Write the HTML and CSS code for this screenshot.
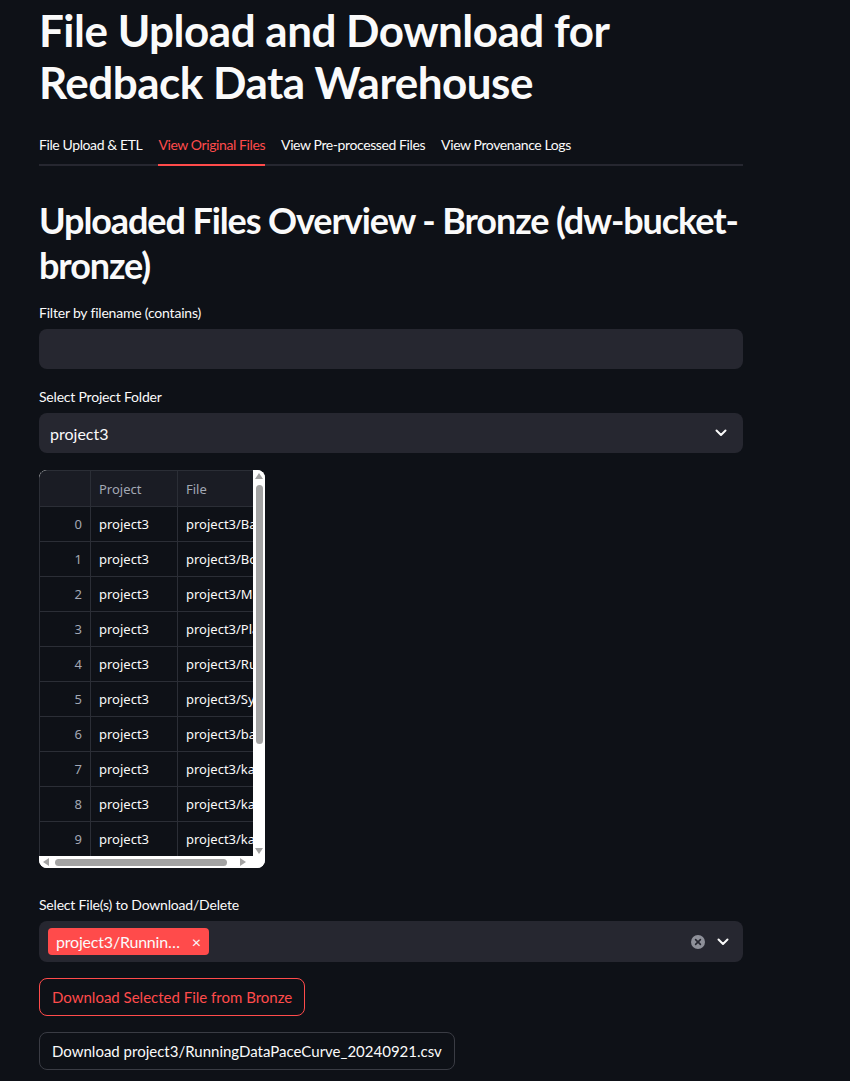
FILE: index.html
```html
<!DOCTYPE html>
<html lang="en">
<head>
<meta charset="utf-8">
<title>File Upload and Download for Redback Data Warehouse</title>
<link rel="stylesheet" href="styles.css">
</head>
<body>
<main class="main">
  <h1 class="title">File Upload and Download for Redback Data Warehouse</h1>

  <nav class="tabs">
    <span class="tab">File Upload &amp; ETL</span>
    <span class="tab tab-active">View Original Files</span>
    <span class="tab">View Pre-processed Files</span>
    <span class="tab">View Provenance Logs</span>
  </nav>

  <h2 class="subheader">Uploaded Files Overview - Bronze (dw-bucket-bronze)</h2>

  <div class="field">
    <label class="label">Filter by filename (contains)</label>
    <div class="input"></div>
  </div>

  <div class="field">
    <label class="label">Select Project Folder</label>
    <div class="input select">
      <span class="select-value">project3</span>
      <svg class="chev" width="12" height="8" viewBox="0 0 12 8"><path d="M1.5 1.5 L6 6 L10.5 1.5" fill="none" stroke="#fafafa" stroke-width="2" stroke-linecap="round" stroke-linejoin="round"/></svg>
    </div>
  </div>

  <div class="grid-wrap">
    <div class="grid-body">
      <div class="grid">
        <div class="cell head idx"></div><div class="cell head">Project</div><div class="cell head">File</div>
        <div class="cell idx">0</div><div class="cell">project3</div><div class="cell">project3/Ba</div>
        <div class="cell idx">1</div><div class="cell">project3</div><div class="cell">project3/Bo</div>
        <div class="cell idx">2</div><div class="cell">project3</div><div class="cell">project3/Ma</div>
        <div class="cell idx">3</div><div class="cell">project3</div><div class="cell">project3/Pla</div>
        <div class="cell idx">4</div><div class="cell">project3</div><div class="cell">project3/Ru</div>
        <div class="cell idx">5</div><div class="cell">project3</div><div class="cell">project3/Sy</div>
        <div class="cell idx">6</div><div class="cell">project3</div><div class="cell">project3/ba</div>
        <div class="cell idx">7</div><div class="cell">project3</div><div class="cell">project3/ka</div>
        <div class="cell idx">8</div><div class="cell">project3</div><div class="cell">project3/ka</div>
        <div class="cell idx">9</div><div class="cell">project3</div><div class="cell">project3/ka</div>
      </div>
      <div class="vscroll">
        <span class="arrow arrow-up"></span>
        <span class="vthumb"></span>
        <span class="arrow arrow-down"></span>
      </div>
    </div>
    <div class="hscroll">
      <span class="arrow arrow-left"></span>
      <span class="hthumb"></span>
      <span class="arrow arrow-right"></span>
    </div>
  </div>

  <div class="field field-multi">
    <label class="label">Select File(s) to Download/Delete</label>
    <div class="input multi">
      <span class="tag">project3/Runnin… <span class="tag-x">×</span></span>
      <span class="multi-icons">
        <svg width="14" height="14" viewBox="0 0 14 14"><circle cx="7" cy="7" r="7" fill="#8e9099"/><path d="M4.6 4.6 L9.4 9.4 M9.4 4.6 L4.6 9.4" stroke="#262730" stroke-width="1.6" stroke-linecap="round"/></svg>
        <svg width="12" height="8" viewBox="0 0 12 8"><path d="M1.5 1.5 L6 6 L10.5 1.5" fill="none" stroke="#fafafa" stroke-width="2" stroke-linecap="round" stroke-linejoin="round"/></svg>
      </span>
    </div>
  </div>

  <div class="btn-row"><button class="btn btn-red">Download Selected File from Bronze</button></div>
  <div class="btn-row"><button class="btn">Download project3/RunningDataPaceCurve_20240921.csv</button></div>
</main>
</body>
</html>
```

FILE: styles.css
```css
html, body {
  margin: 0;
  padding: 0;
  background: #0e1117;
  color: #fafafa;
  font-family: "Lato", "Roboto", sans-serif;
}

.main {
  width: 704px;
  padding: 4px 0 0 39px;
  display: flex;
  flex-direction: column;
}

.title {
  margin: 0;
  font-size: 44px;
  line-height: 52px;
  font-weight: 700;
  width: 640px;
  letter-spacing: -0.5px;
}

.tabs {
  margin-top: 16px;
  display: flex;
  gap: 16px;
  height: 42px;
  border-bottom: 2px solid #262730;
  box-sizing: border-box;
  align-items: stretch;
}

.tab {
  font-size: 14px;
  letter-spacing: -0.4px;
  display: flex;
  align-items: center;
  margin-bottom: -2px;
  border-bottom: 2px solid transparent;
  color: #fafafa;
  white-space: nowrap;
}

.tab-active {
  color: #ff4b4b;
  border-bottom-color: #ff4b4b;
}

.subheader {
  margin: 32px 0 0;
  font-size: 36px;
  line-height: 45px;
  font-weight: 700;
  width: 706px;
  letter-spacing: -1.1px;
}

.field {
  display: flex;
  flex-direction: column;
  gap: 6px;
  margin-top: 15px;
}

.field + .field { margin-top: 18px; }

.label {
  font-size: 14px;
  line-height: 20px;
  letter-spacing: -0.2px;
}

.input {
  height: 40px;
  background: #262730;
  border-radius: 8px;
  box-sizing: border-box;
}

.select {
  display: flex;
  align-items: center;
  justify-content: space-between;
  padding: 0 16px 0 11px;
  font-size: 16px;
}

.grid-wrap {
  margin-top: 17px;
  width: 226px;
  height: 398px;
  border-radius: 8px;
  overflow: hidden;
  display: flex;
  flex-direction: column;
  background: #ffffff;
}

.grid-body {
  display: flex;
  height: 386px;
}

.grid {
  width: 214px;
  display: grid;
  grid-template-columns: 51px 87px 1fr;
  grid-template-rows: 36px repeat(10, 35px);
  background: #0e1117;
  border: 1px solid #2b2e36;
  border-right: none;
  border-bottom: none;
  border-top-left-radius: 8px;
  box-sizing: border-box;
  overflow: hidden;
  font-family: "Noto Sans", sans-serif;
  font-size: 13px;
}

.cell {
  display: flex;
  align-items: center;
  padding: 0 8px;
  border-right: 1px solid #2b2e36;
  border-bottom: 1px solid #2b2e36;
  white-space: nowrap;
  overflow: hidden;
  color: #fafafa;
}

.cell:nth-child(3n) { border-right: none; }

.head {
  background: #1a1c24;
  color: #a3a8b4;
}

.idx {
  justify-content: flex-end;
  color: #a3a8b4;
}

.vscroll {
  width: 12px;
  background: #ffffff;
  display: flex;
  flex-direction: column;
  align-items: center;
}

.vthumb {
  margin-top: 6px;
  width: 7px;
  height: 259px;
  background: #a3a3a3;
  border-radius: 4px;
}

.hscroll {
  height: 12px;
  background: #ffffff;
  display: flex;
  align-items: center;
  padding: 0 0 0 4px;
}

.hthumb {
  width: 172px;
  height: 7px;
  margin-left: 6px;
  background: #a3a3a3;
  border-radius: 4px;
}

.arrow {
  width: 0;
  height: 0;
  border: 4px solid transparent;
}
.arrow-up { border-bottom: 6px solid #a3a3a3; border-top: none; margin-top: 3px; }
.arrow-down { border-top: 6px solid #a3a3a3; border-bottom: none; margin-top: auto; margin-bottom: 2px; }
.arrow-left { border-right: 6px solid #a3a3a3; border-left: none; }
.arrow-right { border-left: 6px solid #a3a3a3; border-right: none; margin-left: 13px; }

.field-multi { margin-top: 27px; }

.multi {
  height: 41px;
  display: flex;
  align-items: center;
  justify-content: space-between;
  padding: 0 14px 0 9px;
}

.tag {
  background: #ff4b4b;
  color: #fafafa;
  border-radius: 4px;
  height: 27px;
  display: flex;
  align-items: center;
  padding: 0 8px;
  font-size: 16px;
  letter-spacing: -0.2px;
  gap: 12px;
}

.tag-x { font-size: 16px; }

.multi-icons {
  display: flex;
  align-items: center;
  gap: 12px;
}

.btn-row {
  margin-top: 16px;
  display: flex;
}

.btn {
  height: 38px;
  padding: 0 12px;
  border-radius: 8px;
  border: 1px solid #3a3c44;
  background: transparent;
  color: #fafafa;
  font-family: "Lato", "Roboto", sans-serif;
  font-size: 15px;
}

.btn-red {
  border-color: #ff4b4b;
  color: #ff4b4b;
}
```
